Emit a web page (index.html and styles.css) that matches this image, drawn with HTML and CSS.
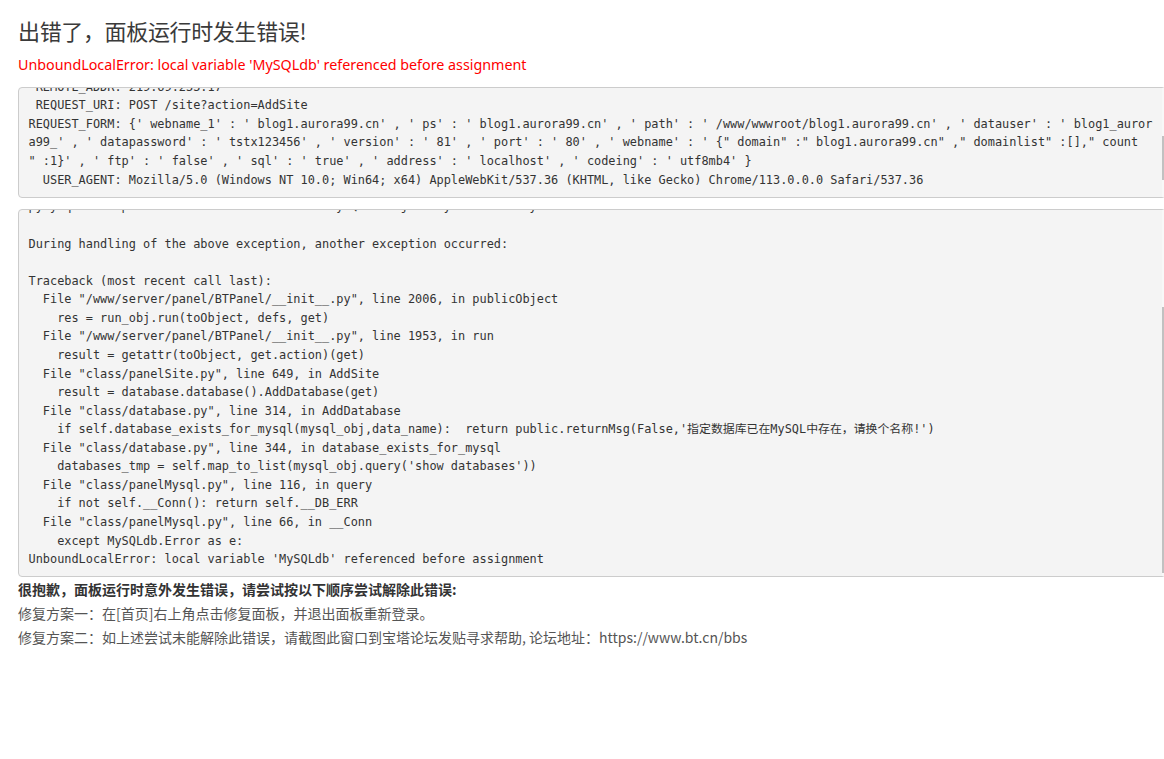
FILE: index.html
```html
<!DOCTYPE html>
<html lang="zh-CN">
<head>
  <meta charset="UTF-8">
  <title>面板运行错误</title>
  <link rel="stylesheet" href="styles.css">
</head>
<body>
  <h2 class="title">出错了，面板运行时发生错误!</h2>
  <p class="error-line">UnboundLocalError: local variable 'MySQLdb' referenced before assignment</p>

  <!-- request info -->
  <div class="log">
    <pre class="trace trace-request" data-scroll="94">REQUEST_DATE: [ 2023-05-21 15:42:18 ]
 PAN_VERSION: 7.9.8
  OS_VERSION: CentOS Linux 7.9.2009 (Core)
 REMOTE_PORT: 8888
 REMOTE_ADDR: 219.69.233.17
 REQUEST_URI: POST /site?action=AddSite
REQUEST_FORM: {' webname_1' : ' blog1.aurora99.cn' , ' ps' : ' blog1.aurora99.cn' , ' path' : ' /www/wwwroot/blog1.aurora99.cn' , ' datauser' : ' blog1_auror
a99_' , ' datapassword' : ' tstx123456' , ' version' : ' 81' , ' port' : ' 80' , ' webname' : ' {" domain" :" blog1.aurora99.cn" ," domainlist" :[]," count
" :1}' , ' ftp' : ' false' , ' sql' : ' true' , ' address' : ' localhost' , ' codeing' : ' utf8mb4' }
  USER_AGENT: Mozilla/5.0 (Windows NT 10.0; Win64; x64) AppleWebKit/537.36 (KHTML, like Gecko) Chrome/113.0.0.0 Safari/537.36

</pre>
    <div class="scroll-track"><span class="scroll-thumb thumb-request"></span></div>
  </div>

  <!-- traceback -->
  <div class="log log-last">
    <pre class="trace trace-stack" data-scroll="end">Traceback (most recent call last):
  File "class/panelMysql.py", line 58, in __Conn
    import MySQLdb
  File "/www/server/panel/pyenv/lib/python3.7/site-packages/MySQLdb/__init__.py", line 18, in &lt;module&gt;
    from . import _mysql
ImportError: libmysqlclient.so.20: cannot open shared object file: No such file or directory
Type error: import of MySQLdb failed, the library may be missing
pymysql.err.OperationalError: cannot load MySQLdb object by the library

During handling of the above exception, another exception occurred:

Traceback (most recent call last):
  File "/www/server/panel/BTPanel/__init__.py", line 2006, in publicObject
    res = run_obj.run(toObject, defs, get)
  File "/www/server/panel/BTPanel/__init__.py", line 1953, in run
    result = getattr(toObject, get.action)(get)
  File "class/panelSite.py", line 649, in AddSite
    result = database.database().AddDatabase(get)
  File "class/database.py", line 314, in AddDatabase
    if self.database_exists_for_mysql(mysql_obj,data_name):  return public.returnMsg(False,'指定数据库已在MySQL中存在，请换个名称!')
  File "class/database.py", line 344, in database_exists_for_mysql
    databases_tmp = self.map_to_list(mysql_obj.query('show databases'))
  File "class/panelMysql.py", line 116, in query
    if not self.__Conn(): return self.__DB_ERR
  File "class/panelMysql.py", line 66, in __Conn
    except MySQLdb.Error as e:
UnboundLocalError: local variable 'MySQLdb' referenced before assignment</pre>
    <div class="scroll-track"><span class="scroll-thumb thumb-stack"></span></div>
  </div>

  <div class="help">
    <p class="help-head">很抱歉，面板运行时意外发生错误，请尝试按以下顺序尝试解除此错误:</p>
    <p>修复方案一：在[首页]右上角点击修复面板，并退出面板重新登录。</p>
    <p>修复方案二：如上述尝试未能解除此错误，请截图此窗口到宝塔论坛发贴寻求帮助, 论坛地址：https://www.bt.cn/bbs</p>
  </div>

  <script src="script.js"></script>
</body>
</html>
```

FILE: styles.css
```css
html, body {
  overflow-x: hidden;
}

body {
  margin: 0;
  padding: 15px 0 0 18px;
  font-family: "Noto Sans", "Noto Sans CJK SC", sans-serif;
  color: #333;
  background: #fff;
}

.title {
  margin: 0 0 10px;
  font-family: "Noto Sans CJK SC", sans-serif;
  font-size: 22px;
  font-weight: normal;
  line-height: 30px;
  letter-spacing: -0.35px;
  color: #3a3a3a;
}

.error-line {
  margin: 0 0 12px;
  font-size: 14.3px;
  line-height: 20px;
  color: #f00;
}

.log {
  position: relative;
  margin: 0 -2px 11px 0;
}

.log-last {
  margin-bottom: 0;
}

.trace {
  box-sizing: border-box;
  margin: 0;
  padding: 9.5px 9.5px 7.5px;
  font-family: "DejaVu Sans Mono", "Noto Sans CJK SC", monospace;
  font-size: 11.9px;
  line-height: 18.57px;
  color: #333;
  background-color: #f4f4f4;
  border: 1px solid #ccc;
  border-radius: 4px;
  white-space: pre;
  overflow: hidden;
}

.trace-request {
  height: 111px;
}

.trace-stack {
  height: 368px;
}

/* fake scrollbar, the screenshot keeps it visible */
.scroll-track {
  position: absolute;
  top: 1px;
  bottom: 1px;
  right: 1px;
  width: 3px;
  background: #f8f8f8;
}

.scroll-thumb {
  position: absolute;
  left: 0;
  width: 3px;
  background: #c1c1c1;
}

.thumb-request {
  top: 48px;
  height: 44px;
}

.thumb-stack {
  top: 97px;
  height: 266px;
}

.help {
  font-family: "Noto Sans CJK SC", sans-serif;
  font-size: 14px;
  color: #555;
}

.help p {
  margin: 0;
  line-height: 24px;
}

.help .help-head {
  font-weight: bold;
  color: #333;
}
```

FILE: script.js
```js
// put the two log boxes at the scroll position of the original page
document.querySelectorAll('.trace').forEach(box => {
  if (box.dataset.scroll === 'end') {
    box.scrollTop = box.scrollHeight;
  } else {
    box.scrollTop = Number(box.dataset.scroll);
  }
});
```
